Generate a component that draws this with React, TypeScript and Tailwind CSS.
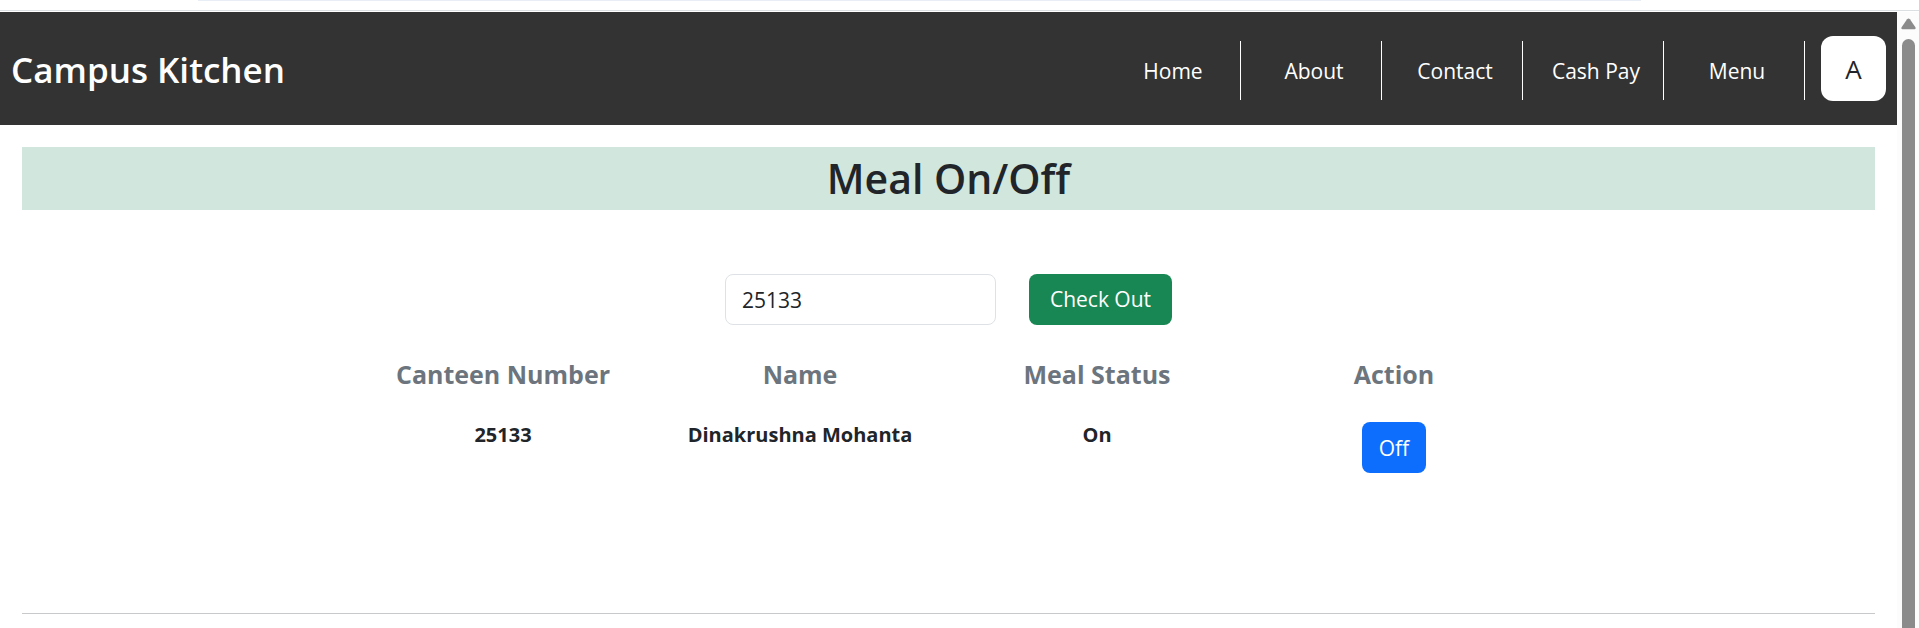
import { useState } from "react";

const links = ["Home", "About", "Contact", "Cash Pay", "Menu"];
const columns = ["Canteen Number", "Name", "Meal Status", "Action"];

function Header() {
  return (
    <header className="flex h-[113px] items-center justify-between bg-[#333333] pr-[11px] pl-[11px] text-white">
      <h1 className="pt-0.5 text-[35px] leading-[48px] font-semibold">Campus Kitchen</h1>
      <div className="flex items-center">
        <nav className="flex pt-1">
          {links.map((link) => (
            <a
              key={link}
              href="#"
              className="flex h-[59px] w-[141px] items-center justify-center border-r border-white pl-1.5 text-[21px] leading-[32px]"
            >
              {link}
            </a>
          ))}
        </nav>
        <button
          type="button"
          className="ml-4 flex size-[65px] items-center justify-center rounded-[12px] bg-white text-[26px] leading-[40px] text-[#212529]"
        >
          A
        </button>
      </div>
    </header>
  );
}

function ScrollTrack() {
  return (
    <div aria-hidden="true" className="flex w-[22px] shrink-0 flex-col items-center bg-[#fcfcfc] pt-1.5">
      <svg width="15" height="12" viewBox="0 0 15 12" className="block">
        <path d="M6.1 1.3Q7.5-.5 8.9 1.3L14.4 9.2Q15.2 11 13.4 11.2H1.6Q-.2 11 .6 9.2Z" fill="#8b8b8b" />
      </svg>
      <div className="mt-[9px] w-[13px] flex-1 rounded-t-full bg-[#8b8b8b]" />
    </div>
  );
}

export default function App() {
  const [number, setNumber] = useState("25133");
  const [mealOn, setMealOn] = useState(true);

  return (
    <div className="flex min-h-screen flex-col bg-white font-['Open_Sans','Noto_Sans',sans-serif] text-[#212529]">
      <div className="flex h-3 flex-col border-b border-white">
        <div className="flex-1 pr-[278px] pl-[198px]">
          <div className="h-px bg-[#e9eef6]" />
        </div>
        <div className="h-px bg-[#dcdfe2]" />
      </div>
      <div className="flex flex-1">
        <div className="min-w-0 flex-1">
          <Header />
          <main className="px-[22px] pt-[22px]">
            <h2 className="bg-[#d1e7dd] text-center text-[41px] leading-[63px] font-semibold">Meal On/Off</h2>
            <form className="mt-16 flex justify-center gap-[33px]" onSubmit={(e) => e.preventDefault()}>
              <input
                type="text"
                aria-label="Canteen number"
                value={number}
                onChange={(e) => setNumber(e.target.value)}
                className="h-[51px] w-[271px] rounded-lg border border-[#dee2e6] px-4 text-[21px]"
              />
              <button type="submit" className="h-[51px] w-[143px] rounded-lg bg-[#198754] text-[21px] text-white">
                Check Out
              </button>
            </form>
            <table className="mx-auto mt-[29px] w-full max-w-[1188px] table-fixed text-center font-bold">
              <thead>
                <tr className="text-[25px] leading-[40px] text-[#6c757d]">
                  {columns.map((column) => (
                    <th key={column} scope="col" className="pb-7 font-bold">
                      {column}
                    </th>
                  ))}
                </tr>
              </thead>
              <tbody>
                <tr className="align-top text-[20px] leading-[26px]">
                  <td>25133</td>
                  <td>Dinakrushna Mohanta</td>
                  <td>{mealOn ? "On" : "Off"}</td>
                  <td>
                    <button
                      type="button"
                      onClick={() => setMealOn(!mealOn)}
                      className="mx-auto block h-[51px] w-16 rounded-lg bg-[#0d6efd] text-[21px] font-normal text-white"
                    >
                      {mealOn ? "Off" : "On"}
                    </button>
                  </td>
                </tr>
              </tbody>
            </table>
            <hr className="mt-[140px] border-[#c8c9ca]" />
          </main>
        </div>
        <ScrollTrack />
      </div>
    </div>
  );
}
